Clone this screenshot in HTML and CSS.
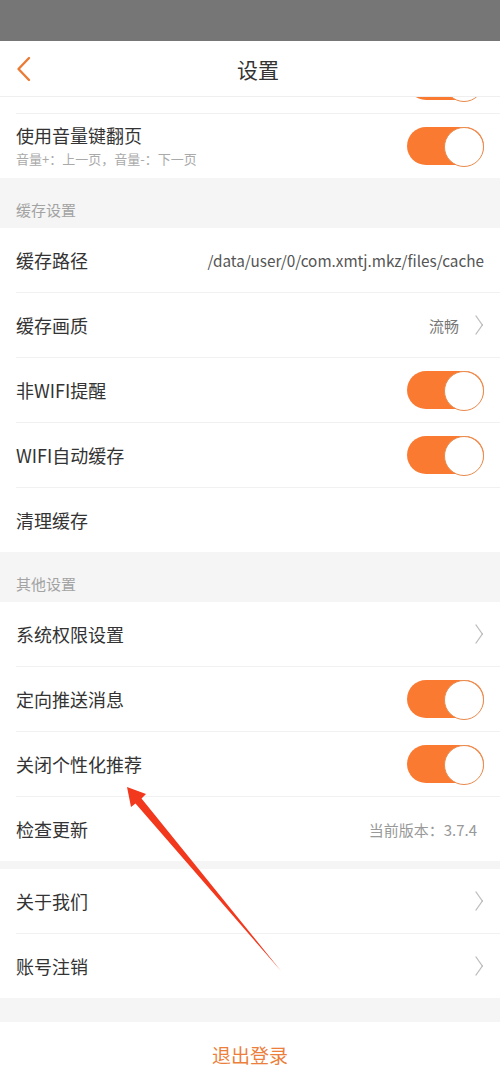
FILE: index.html
```html
<!DOCTYPE html>
<html lang="zh-CN">
<head>
    <meta charset="UTF-8">
    <title>设置</title>
    <link rel="stylesheet" href="styles.css">
</head>
<body>
    <div class="statusbar"></div>
    <header class="topbar">
        <svg class="back" width="15" height="26" viewBox="0 0 15 26">
            <polyline points="13,2 2.5,13 13,24" fill="none" stroke="#ea7a34" stroke-width="2.4" stroke-linecap="round" stroke-linejoin="round"/>
        </svg>
        <h1>设置</h1>
        <span></span>
    </header>

    <div class="list">
        <div class="row row-cut"><span class="switch"></span></div>
        <div class="row">
            <div class="label">
                <div class="title">使用音量键翻页</div>
                <div class="sub">音量+：上一页，音量-：下一页</div>
            </div>
            <span class="switch"></span>
        </div>
    </div>

    <div class="section">缓存设置</div>
    <div class="list">
        <div class="row">
            <span class="title">缓存路径</span>
            <span class="value path">/data/user/0/com.xmtj.mkz/files/cache</span>
        </div>
        <div class="row">
            <span class="title">缓存画质</span>
            <span class="value">流畅<i class="arrow"></i></span>
        </div>
        <div class="row">
            <span class="title">非WIFI提醒</span>
            <span class="switch"></span>
        </div>
        <div class="row">
            <span class="title">WIFI自动缓存</span>
            <span class="switch"></span>
        </div>
        <div class="row">
            <span class="title">清理缓存</span>
        </div>
    </div>

    <div class="section">其他设置</div>
    <div class="list">
        <div class="row">
            <span class="title">系统权限设置</span>
            <span class="value"><i class="arrow"></i></span>
        </div>
        <div class="row">
            <span class="title">定向推送消息</span>
            <span class="switch"></span>
        </div>
        <div class="row">
            <span class="title">关闭个性化推荐</span>
            <span class="switch"></span>
        </div>
        <div class="row">
            <span class="title">检查更新</span>
            <span class="value version">当前版本：3.7.4</span>
        </div>
    </div>

    <div class="gap"></div>
    <div class="list">
        <div class="row">
            <span class="title">关于我们</span>
            <span class="value"><i class="arrow"></i></span>
        </div>
        <div class="row">
            <span class="title">账号注销</span>
            <span class="value"><i class="arrow"></i></span>
        </div>
    </div>

    <div class="gap gap-big"></div>
    <div class="logout">退出登录</div>

    <!-- 标注箭头 -->
    <svg class="mark" width="500" height="1084" viewBox="0 0 500 1084">
        <polygon points="127,787 146,794 141.5,798.5 281,971 135.5,803.5 131,807" fill="#f2381d"/>
    </svg>
</body>
</html>
```

FILE: styles.css
```css
* {
    box-sizing: border-box;
}
body {
    margin: 0;
    position: relative;
    width: 500px;
    min-height: 1084px;
    background-color: #fff;
    font-family: "Noto Sans CJK SC", "Noto Sans", sans-serif;
    color: #333;
}
.statusbar {
    height: 41px;
    background-color: #767676;
}
.topbar {
    height: 56px;
    display: grid;
    grid-template-columns: 1fr auto 1fr;
    align-items: center;
    padding-left: 16px;
    border-bottom: 1px solid #efefef;
}
.topbar h1 {
    margin: 0;
    font-size: 21px;
    font-weight: normal;
    color: #333;
}
.back {
    display: block;
}
.list {
    background-color: #fff;
}
.row {
    height: 65px;
    margin-left: 16px;
    padding-right: 16px;
    display: flex;
    align-items: center;
    justify-content: space-between;
    border-top: 1px solid #f1f1f1;
}
.row:first-child {
    height: 64px;
    border-top: none;
}
.row-cut {
    height: 16px !important;
    overflow: hidden;
    align-items: flex-start;
    justify-content: flex-end;
}
.row-cut .switch {
    margin-top: -35px;
}
.title {
    font-size: 18px;
    line-height: 24px;
    color: #333;
}
.label .title {
    line-height: 22px;
}
.sub {
    font-size: 13px;
    line-height: 18px;
    margin-top: 4px;
    color: #aaa;
}
.section {
    height: 50px;
    background-color: #f5f5f5;
    padding: 21px 16px 0;
    font-size: 15px;
    line-height: 22px;
    color: #a3a3a3;
}
.value {
    display: flex;
    align-items: center;
    font-size: 15px;
    color: #777;
}
.path {
    font-size: 15.3px;
    color: #555;
}
.version {
    font-size: 15px;
    color: #999;
    padding-right: 7px;
}
.arrow {
    display: inline-block;
    width: 10px;
    height: 10px;
    margin-left: 12px;
    margin-right: 3px;
    border-top: 1.5px solid #bbb;
    border-right: 1.5px solid #bbb;
    transform: scaleY(1.4) rotate(45deg);
}
.switch {
    display: block;
    position: relative;
    width: 77px;
    height: 38px;
    border-radius: 19px;
    background-color: #fa7a32;
    flex-shrink: 0;
}
.switch::after {
    content: "";
    position: absolute;
    right: 0;
    top: 0;
    width: 38px;
    height: 38px;
    border-radius: 50%;
    background-color: #fff;
    border: 1.5px solid #e98a4c;
}
.gap {
    height: 8px;
    background-color: #f5f5f5;
}
.gap-big {
    height: 24px;
}
.logout {
    height: 64px;
    display: flex;
    align-items: center;
    justify-content: center;
    font-size: 19px;
    color: #ec7f3c;
}
.mark {
    position: absolute;
    left: 0;
    top: 0;
    pointer-events: none;
}
```
